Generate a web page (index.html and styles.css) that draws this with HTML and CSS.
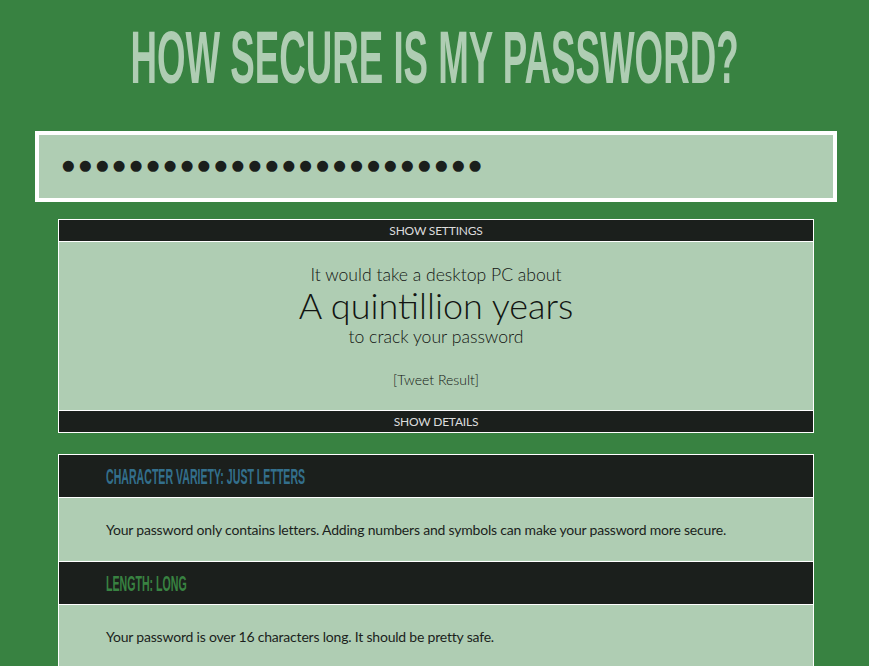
FILE: index.html
```html
<!DOCTYPE html>
<html lang="en">
<head>
<meta charset="utf-8">
<title>How Secure Is My Password?</title>
<link rel="stylesheet" href="styles.css">
</head>
<body>
<header class="masthead">
  <h1 class="title"><span class="title-text">HOW SECURE IS MY PASSWORD?</span></h1>
</header>
<div class="pw-box">
  <span class="dots">●●●●●●●●●●●●●●●●●●●●●●●●●</span>
</div>
<section class="result">
  <div class="bar">SHOW SETTINGS</div>
  <div class="result-body">
    <p class="lead">It would take a desktop PC about</p>
    <p class="time">A quintillion years</p>
    <p class="lead small">to crack your password</p>
    <p class="tweet">[Tweet Result]</p>
  </div>
  <div class="bar">SHOW DETAILS</div>
</section>
<section class="details">
  <div class="d-head"><h2 class="d-title blue"><span>CHARACTER VARIETY: JUST LETTERS</span></h2></div>
  <div class="d-body">Your password only contains letters. Adding numbers and symbols can make your password more secure.</div>
  <div class="d-head"><h2 class="d-title green"><span>LENGTH: LONG</span></h2></div>
  <div class="d-body">Your password is over 16 characters long. It should be pretty safe.</div>
</section>
</body>
</html>
```
FILE: styles.css
```css
html, body {
  margin: 0;
  padding: 0;
}
body {
  background: #388241;
  font-family: Lato, "Open Sans", sans-serif;
  color: #1b1f1c;
  height: 666px;
  overflow: hidden;
}
.masthead {
  height: 131px;
  display: flex;
  justify-content: center;
  align-items: flex-start;
}
.title {
  margin: 0;
  padding-top: 41px;
  font-family: "Liberation Sans", Arial, sans-serif;
  font-weight: 700;
  font-size: 36.7px;
  line-height: 36.7px;
  color: #afcdb3;
  white-space: nowrap;
}
.title-text {
  display: inline-block;
  transform: scaleY(2);
  transform-origin: 50% 50%;
}
.pw-box {
  margin-left: 35px;
  height: 63px;
  width: 771px;
  border: 4px solid #fff;
  background: #afcdb3;
  display: flex;
  align-items: center;
  padding-left: 23px;
  box-sizing: content-box;
}
.dots {
  font-family: "DejaVu Sans", sans-serif;
  font-size: 14.5px;
  letter-spacing: 4.3px;
  color: #1b1f1c;
  margin-bottom: 4px;
}
.result {
  margin: 17px 0 0 58px;
  width: 754px;
  border: 1px solid #fff;
}
.bar {
  background: #1b1f1c;
  color: #dcdcdc;
  text-align: center;
  font-size: 12px;
  height: 21px;
  line-height: 21px;
  letter-spacing: -0.2px;
}
.result-body {
  background: #afcdb3;
  border-top: 1px solid #fff;
  border-bottom: 1px solid #fff;
  height: 170px;
  text-align: center;
  box-sizing: border-box;
}
.result-body p {
  margin: 0;
}
.lead {
  font-weight: 300;
  font-size: 17.6px;
  padding-top: 22px;
  line-height: 22px;
  color: #121512;
}
.time {
  font-weight: 300;
  font-size: 36px;
  line-height: 38px;
  color: #121512;
}
.lead.small {
  padding-top: 3px;
  line-height: 20px;
}
.tweet {
  font-weight: 300;
  font-size: 14px;
  line-height: 17px;
  padding-top: 24px;
  color: #121512;
}
.details {
  margin: 21px 0 0 58px;
  width: 754px;
  border: 1px solid #fff;
  border-bottom: none;
}
.d-head {
  background: #1b1f1c;
  height: 42px;
  border-bottom: 1px solid #fff;
  display: flex;
  align-items: center;
  padding-left: 47px;
}
.d-title {
  margin: 0;
  font-family: "Liberation Sans", Arial, sans-serif;
  font-weight: 700;
  font-size: 10.6px;
  line-height: 12px;
  white-space: nowrap;
}
.d-title span {
  display: inline-block;
  transform: scaleY(2);
  transform-origin: 0 50%;
}
.d-title.blue { color: #336f8c; }
.d-title.green { color: #388241; }
.d-body {
  background: #afcdb3;
  height: 63px;
  border-bottom: 1px solid #fff;
  display: flex;
  align-items: center;
  padding-left: 47px;
  font-size: 14px;
  font-weight: 400;
  letter-spacing: -0.2px;
}
```
